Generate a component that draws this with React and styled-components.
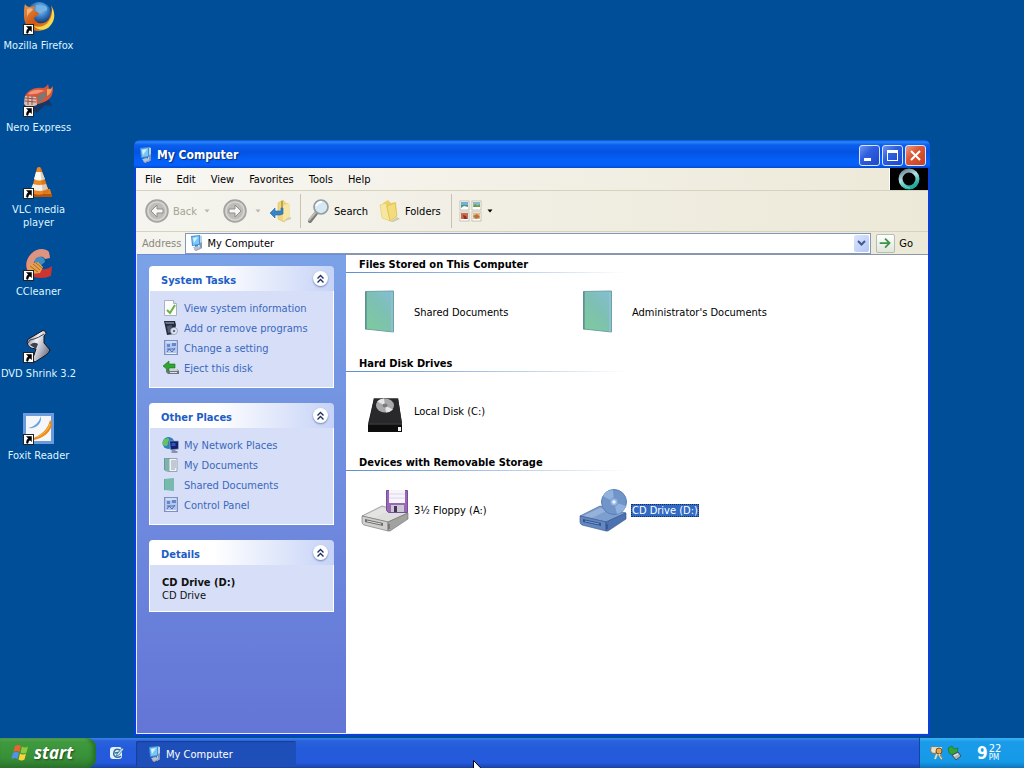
import React from "react";
import styled, { createGlobalStyle, css } from "styled-components";

const GlobalStyle = createGlobalStyle`
  * {
    box-sizing: border-box;
  }
  body {
    margin: 0;
    overflow: hidden;
    font-family: "DejaVu Sans Condensed", "DejaVu Sans", sans-serif;
    font-size: 11px;
    line-height: 13px;
  }
  button, input {
    font: inherit;
    color: inherit;
    padding: 0;
    border: 0;
    background: none;
  }
  a {
    color: inherit;
    text-decoration: none;
  }
  h1, h2, p {
    margin: 0;
    font-size: inherit;
  }
  svg {
    display: block;
    flex: none;
  }
`;

/* ---------- icons ---------- */

const ShortcutArrow = () => (
  <g>
    <rect x="0.5" y="22.5" width="10" height="10" fill="#fff" stroke="#222" />
    <path d="M3.500 24.500h5v5l-1.600-1.600q-2 1.500-2 3.600l-1.600-0.500q0-3 2-4.700z" fill="#000" stroke="#000" strokeWidth="0.500" />
  </g>
);

const FirefoxIcon = () => (
  <svg width="32" height="33" viewBox="0 0 32 33">
    <defs>
      <radialGradient id="ffGlobe" cx="55%" cy="30%" r="60%">
        <stop offset="0" stopColor="#a5d4f5" />
        <stop offset="0.500" stopColor="#3c83cc" />
        <stop offset="1" stopColor="#12346f" />
      </radialGradient>
      <linearGradient id="ffFox" x1="0" y1="0" x2="1" y2="1">
        <stop offset="0" stopColor="#e59a4e" />
        <stop offset="0.500" stopColor="#cf5514" />
        <stop offset="1" stopColor="#eda41e" />
      </linearGradient>
    </defs>
    <circle cx="16" cy="12" r="12" fill="url(#ffGlobe)" />
    <path d="M13 3c3 0 4 2 7 1s5 2 4 4-4 0-5 2-3 1-5-1z" fill="#74b4e4" />
    <path d="M2 2c1 2 3 3 5 3 2-1 4-1 6 0-2 1-3 3-2 4 2 0 4 1 5 3-1 2-4 2-5 4 1 4 5 6 9 5 5-1 7-5 8-10 1-3 1-5 0-8 3 4 4 9 2 14-2 7-8 12-15 12C7 29 1 23 1 14 1 9 1 5 2 2z" fill="url(#ffFox)" />
    <path d="M28 4c2 4 1 11-2 15-3 5-9 7-15 5 4 5 12 5 16 0 5-5 6-13 1-20z" fill="#f5d852" />
    <path d="M4 7c2-1 4-1 6 0-1 3-4 3-6 8z" fill="#f0b47c" />
    <ShortcutArrow />
  </svg>
);

const NeroIcon = () => (
  <svg width="32" height="33" viewBox="0 0 32 33">
    <path d="M14 18l12-2 3 6-7-1-8 8-5-3z" fill="#163763" />
    <path d="M2 12C5 6 12 3 19 4c3 0 5-2 6-4 1 2 0 4 2 5l3-3c0 4 0 10-4 13-6 5-14 5-20 7-4-2-5-6-4-10z" fill="#d9553c" />
    <path d="M5 10c4-5 11-5 17-3-4 0-6 3-10 3-3 0-4 1-7 0z" fill="#f29478" />
    <path d="M24 5c2 0 4 1 5-1 0 4-3 7-5 8z" fill="#f0a55a" />
    <path d="M2 12l11 1 1 8-9 3-4-4z" fill="#d8c0b4" />
    <path d="M2 14l11 1M2 17l11 1M5 12v9M9 12v9" stroke="#975046" fill="none" />
    <path d="M14 12l8-4 2 3-8 9z" fill="#7b7775" />
    <ShortcutArrow />
  </svg>
);

const VlcIcon = () => (
  <svg width="32" height="33" viewBox="0 0 32 33">
    <path d="M5 24l22-1 2 7H5z" fill="#e8801a" />
    <path d="M5 28h24v3H5z" fill="#b95308" />
    <path d="M14 2q2-2 4 0l8 24q-9 5-18 1z" fill="#f08821" />
    <path d="M13 6h6l3 7q-6 3-11 0z" fill="#fbfbf6" />
    <path d="M10 18q6 2 13 0l2 5q-8 4-17 0z" fill="#f1f1ee" />
    <path d="M17 2l1 0 8 24-6 3z" fill="#994a10" opacity="0.250" />
    <ShortcutArrow />
  </svg>
);

const CCleanerIcon = () => (
  <svg width="32" height="33" viewBox="0 0 32 33">
    <path d="M27 8C24 2 17 0 11 4 4 8 1 17 5 24c4 7 15 7 23 4l1-10c-4 4-14 5-16-1-2-6 4-11 9-8z" fill="#cf3530" />
    <path d="M26 4C21-1 13 1 8 6 3 11 2 18 5 23l6-3c-2-6 3-13 9-11l2 2 5-1z" fill="#e0947f" />
    <path d="M13 10c5-3 9 0 9 4l-5 4-6-4z" fill="#3f8dc2" />
    <path d="M5 17l10-3 5 5-3 6-9 1z" fill="#e4a34e" />
    <path d="M7 18l8 6M10 16l7 6M13 15l6 5" stroke="#b36522" />
    <ShortcutArrow />
  </svg>
);

const DvdShrinkIcon = () => (
  <svg width="32" height="33" viewBox="0 0 32 33">
    <defs>
      <linearGradient id="dvdRoll" x1="0" y1="0.200" x2="1" y2="0.800">
        <stop offset="0" stopColor="#77788a" />
        <stop offset="0.350" stopColor="#f1f1f5" />
        <stop offset="0.650" stopColor="#b3b4c2" />
        <stop offset="1" stopColor="#5d5f6c" />
      </linearGradient>
    </defs>
    <path d="M4 12Q4 9 7 8L20 0.500q3 0 3 3L21 6v7l6 7q-1 3-4 5L12 32q-3-1-2-4l3-9-5-1q-4-2-4-6z" fill="url(#dvdRoll)" stroke="#15171f" />
    <path d="M5 13q1-4 6-4 4-1 10-5" stroke="#41434f" fill="none" />
    <path d="M7 15q4-4 8-1l-2 5z" fill="#3e404d" />
    <ShortcutArrow />
  </svg>
);

const FoxitIcon = () => (
  <svg width="32" height="33" viewBox="0 0 32 33">
    <rect x="0" y="1" width="31" height="31" fill="#6b9bdb" />
    <rect x="3" y="4" width="25" height="25" fill="#f4f6fa" />
    <path d="M5 16C11 15 16 11 18 4c1 8-5 13-13 12z" fill="#69a2dc" />
    <path d="M8 27C19 23 25 17 27 8l2 3c0 8-9 16-19 17z" fill="#ea8a1b" />
    <path d="M14 25c7-3 11-7 13-13" stroke="#f9c353" fill="none" />
    <ShortcutArrow />
  </svg>
);

const ComputerIcon = () => (
  <svg width="16" height="16" viewBox="0 0 16 16">
    <path d="M10 0l3 1v12l-3 2z" fill="#b9d2e8" />
    <path d="M11 8l2-1v6l-2 1z" fill="#8299b4" />
    <path d="M2 1l9-1v10l-8 1z" fill="#3f93de" />
    <path d="M3 2l7-1v8l-6 1z" fill="#7cc6f4" />
    <path d="M4 3l5-1-4 6z" fill="#d4f2ff" />
    <path d="M6 10h3v2H6z" fill="#567ba6" />
    <path d="M4 12l5-1 3 2-5 3z" fill="#aac4df" />
    <path d="M5 14l2 1.500 4-2" stroke="#c08b7d" fill="none" strokeWidth="0.800" />
  </svg>
);

const ArrowCircle = ({ forward }) => (
  <svg width="24" height="24" viewBox="0 0 24 24">
    <circle cx="12" cy="12" r="11" fill="#bdbcb9" stroke="#a3a2a0" strokeWidth="1.500" />
    <circle cx="12" cy="12" r="9" fill="none" stroke="#d6d5d1" strokeWidth="1.500" />
    <path
      d={forward ? "M12 6l6 6-6 6v-4H6v-4h6z" : "M12 6l-6 6 6 6v-4h6v-4h-6z"}
      fill="#f6f6f3"
      stroke="#908f8d"
      strokeWidth="1"
    />
  </svg>
);

const UpFolderIcon = () => (
  <svg width="22" height="24" viewBox="0 0 22 24">
    <path d="M8 4l5-3 2 3 4 1v13l-5 5-6-3z" fill="#efd680" stroke="#dcbc60" strokeWidth="0.600" />
    <path d="M13 7l6-3v14l-6 4z" fill="#f8e7a4" />
    <path d="M16 20l5-2v2l-6 2z" fill="#ccc9bb" />
    <path d="M12 2v8" stroke="#a89446" strokeWidth="1.500" />
    <path d="M0 14l5-5v3h6V9l2 0v6l-3 1H5v3z" fill="#3585c6" stroke="#2267a5" strokeWidth="0.600" />
  </svg>
);

const SearchIcon = () => (
  <svg width="22" height="26" viewBox="1 0 22 26">
    <path d="M10 14l-7 9" stroke="#7c7a78" strokeWidth="4" strokeLinecap="round" />
    <path d="M9 14l-7 8" stroke="#bebbb7" strokeWidth="2" strokeLinecap="round" />
    <circle cx="14" cy="9" r="7" fill="#d6e8f2" stroke="#949da3" strokeWidth="1.700" />
    <path d="M9 8q2-4 6-4" stroke="#fff" strokeWidth="2" fill="none" />
  </svg>
);

const FoldersIcon = () => (
  <svg width="22" height="24" viewBox="0 0 22 24">
    <path d="M4 4l5-3 3 3 5-1 1 14-7 5-8-4z" fill="#eccf68" />
    <path d="M1 6l6-2 4 18-8-3z" fill="#f6e79e" stroke="#e6c866" strokeWidth="0.600" />
    <path d="M8 7l8-3 2 13-7 5z" fill="#f3dc7a" stroke="#dcb94d" strokeWidth="0.600" />
    <path d="M11 23l7-5 3 2-7 3z" fill="#cfc9b2" />
  </svg>
);

const ViewsIcon = () => (
  <svg width="24" height="24" viewBox="0 0 24 24">
    {[[1, 2], [13, 2], [1, 13], [13, 13]].map(([x, y]) => (
      <rect key={`${x}-${y}`} x={x} y={y} width="9" height="9" fill="#fff" stroke="#b8b6ab" strokeWidth="0.800" />
    ))}
    <path d="M2 3h7v3H2z" fill="#6fb2d8" />
    <path d="M2 6h7v2l-4-1-3 2z" fill="#57947f" />
    <path d="M14 3h7v5h-7z" fill="#8ab8cb" />
    <path d="M14 8l2-3 3 2 2-2v3z" fill="#6a9b3c" />
    <path d="M2 14h7v6H2z" fill="#c96a4b" />
    <path d="M4 16l3 1 1 3H5z" fill="#8b3026" />
    <path d="M14 14h7v6h-7z" fill="#e0ba8c" />
    <path d="M14 17l4-2 3 3-4 2z" fill="#b9713c" />
  </svg>
);

const CheckPageIcon = () => (
  <svg width="16" height="16" viewBox="0 0 16 16">
    <path d="M1.500 0.500h9l3 3v12h-12z" fill="#fbfcfb" stroke="#a6b5bd" />
    <path d="M10.500 0.500v3h3" fill="#dde4e8" stroke="#a6b5bd" />
    <path d="M4 10l3 3 5-8" stroke="#6cb045" strokeWidth="2" fill="none" />
  </svg>
);

const ProgramsIcon = () => (
  <svg width="16" height="16" viewBox="0 0 16 16">
    <path d="M1 1h11l1 4-2 9-7 1z" fill="#272c3a" />
    <path d="M2 2h9v2H3z" fill="#66718a" />
    <path d="M4 6l5-1-1 7-3 1z" fill="#4f5b72" />
    <circle cx="11" cy="11" r="3.500" fill="#e3e9f0" stroke="#7b8695" strokeWidth="0.600" />
    <circle cx="11" cy="11" r="1.300" fill="#5d74a0" />
  </svg>
);

const SettingIcon = () => (
  <svg width="16" height="16" viewBox="0 0 16 16">
    <rect x="1.500" y="0.500" width="13" height="14" fill="#b4c6ee" stroke="#7e90bc" />
    <path d="M4 4h3v3H4zM9 3h4v3H9z" fill="#6487ce" />
    <path d="M4 9h8M4 12l2-3 3 3 3-4" stroke="#4c6db4" fill="none" />
    <path d="M3 2h10M3 13.500h10" stroke="#e9f0ff" />
  </svg>
);

const EjectIcon = () => (
  <svg width="16" height="16" viewBox="0 0 16 16">
    <path d="M3 9h11l2 2v3H5l-2-2z" fill="#6e7479" />
    <path d="M4 9h10l1 2H6z" fill="#cdd3d6" />
    <path d="M7 12.500h7" stroke="#dfe3e5" />
    <path d="M0 6l6-5v3h6v4H6v3z" fill="#30a52f" stroke="#17711b" strokeWidth="0.600" />
  </svg>
);

const NetworkIcon = () => (
  <svg width="17" height="16" viewBox="0 0 17 16">
    <circle cx="6" cy="6" r="6" fill="#2c7fc0" />
    <path d="M2 2c4-2 6 0 4 2s1 3-2 5C2 10 0 7 0 6c0-2 1-3 2-4z" fill="#65c35d" />
    <path d="M7 4h9v8l-8 1z" fill="#13226e" stroke="#98a8cd" strokeWidth="0.700" />
    <path d="M9 6h4v3H9z" fill="#3652c0" />
    <path d="M10 13h3v1h2v2H9v-2z" fill="#8593ad" />
  </svg>
);

const MyDocsIcon = () => (
  <svg width="16" height="16" viewBox="0 0 16 16">
    <path d="M1 1h6v14l-6-2z" fill="#5f9d97" />
    <path d="M6 1.500h8v13H6z" fill="#eff3f7" stroke="#8693a2" strokeWidth="0.800" />
    <path d="M8 4h5M8 6h5M8 8h5M8 10h5M8 12h4" stroke="#7d8c9e" strokeWidth="0.800" />
    <path d="M2 1l4 1v13l-4-1z" fill="#7fb2aa" />
  </svg>
);

const SharedIcon = () => (
  <svg width="16" height="16" viewBox="0 0 16 16">
    <path d="M1 2l10-1v13L1 13z" fill="#77b9ac" />
    <path d="M1.500 2v11" stroke="#65a89c" />
  </svg>
);

const FolderIcon = () => (
  <svg width="48" height="48" viewBox="1 0 48 48">
    <defs>
      <linearGradient id="folder" x1="1" y1="0" x2="0.300" y2="1">
        <stop offset="0" stopColor="#85bdd6" />
        <stop offset="0.500" stopColor="#7dc0b3" />
        <stop offset="1" stopColor="#7ec99f" />
      </linearGradient>
    </defs>
    <path d="M5.500 3.500L33.500 3v41L5.500 41z" fill="url(#folder)" stroke="#6fa2a6" />
    <path d="M6 41.500V3.500" stroke="#4f7f84" />
    <path d="M31 4l2 1v39l-2-1z" fill="#8cc2cf" />
  </svg>
);

const HardDiskIcon = () => (
  <svg width="48" height="48" viewBox="1 0 48 48">
    <path d="M14 11h24l4 26v8H8v-8z" fill="#1b1b1c" />
    <path d="M14 11h24l4 25H9z" fill="#29292b" />
    <path d="M14 11.500h24" stroke="#5c5c5e" />
    <path d="M8 37h34v8H8z" fill="#0e0e0f" />
    <path d="M8 37h34" stroke="#4b4b4e" />
    <ellipse cx="25" cy="18.500" rx="9" ry="7" fill="#a9a9ab" />
    <path d="M25 18.500l-8-4q3-3 7-3zM25 18.500l8 4q-3 3-7 3z" fill="#e6e6e7" />
    <ellipse cx="25" cy="18.500" rx="2.500" ry="2" fill="#7a7a7c" />
    <rect x="38" y="40" width="3" height="4" fill="#f1f1ee" />
  </svg>
);

const DriveBase = ({ top, front, side, line }) => (
  <g strokeLinejoin="round">
    <path d="M2 31l20-10 26 7-20 9z" fill={top} stroke={line} strokeWidth="0.600" />
    <path d="M5 31l17-8 8 2-16 8z" fill="#fff" opacity="0.200" />
    <path d="M2 31l26 6v9L4 40q-2-1-2-3z" fill={front} stroke={line} strokeWidth="0.600" />
    <path d="M28 37l20-9v6L30 46h-2z" fill={side} stroke={line} strokeWidth="0.600" />
    <path d="M5 34l18 4v3L5 37z" fill={line} />
    <path d="M7 36l14 3" stroke={top} />
    <path d="M29 39v5" stroke={line} strokeWidth="1.500" />
  </g>
);

const FloppyIcon = () => (
  <svg width="50" height="50" viewBox="0 0 50 50">
    <DriveBase top="#dededc" front="#cfcfcd" side="#a2a2a0" line="#6d6d6b" />
    <path d="M26.500 5.500h21v22h-19l-2-2z" fill="#9a66b6" stroke="#75509a" />
    <rect x="29" y="5" width="16" height="13" fill="#f7f4fb" />
    <path d="M29 9h16M29 13h16" stroke="#ded5e9" />
    <rect x="31" y="20" width="13" height="7" fill="#c9c8d3" />
    <rect x="34" y="21" width="3" height="6" fill="#473355" />
  </svg>
);

const CdDriveIcon = () => (
  <svg width="50" height="50" viewBox="0 0 50 50">
    <DriveBase top="#7d9fd0" front="#6288c4" side="#4c72b0" line="#34538c" />
    <circle cx="36" cy="17" r="12.500" fill="#7194c9" stroke="#5a7eb8" />
    <path d="M36 17L25 11q3-6 10-6zM36 17l12 4q-3 7-9 8z" fill="#92b2de" />
    <circle cx="36" cy="17" r="4" fill="#98b8e2" stroke="#6a8ec6" strokeWidth="0.700" />
    <circle cx="36" cy="17" r="1.700" fill="#eaf3ff" />
  </svg>
);

const ChevronsUp = () => (
  <svg width="9" height="10" viewBox="0 0 9 10">
    <path d="M1.500 4.500l3-3 3 3M1.500 8.500l3-3 3 3" stroke="#1d2f6b" strokeWidth="1.400" fill="none" />
  </svg>
);

const ThrobberIcon = () => (
  <svg width="22" height="22" viewBox="0 0 22 22">
    <defs>
      <linearGradient id="ring" x1="0" y1="0" x2="0.500" y2="1">
        <stop offset="0" stopColor="#64798a" />
        <stop offset="0.500" stopColor="#b5e2e3" />
        <stop offset="1" stopColor="#21ac9f" />
      </linearGradient>
    </defs>
    <circle cx="11" cy="11" r="8.500" fill="none" stroke="url(#ring)" strokeWidth="4" />
    <path d="M3 13q3 7 9 7" stroke="#5de0cd" fill="none" />
  </svg>
);

const WindowsFlag = () => (
  <svg width="19" height="18" viewBox="0 0 19 18">
    <path d="M4 2q3-2 6 0L8.500 8Q5.500 6 2.500 8z" fill="#ed6230" />
    <path d="M11 2.500q3 2 6 0L15.500 8.500q-3 2-6 0z" fill="#8dcb3c" />
    <path d="M2 9q3-2 6 0L6.500 15Q3.500 13 0.500 15z" fill="#5690ef" />
    <path d="M9 9.500q3 2 6 0L13.500 15.500q-3 2-6 0z" fill="#fbd437" />
  </svg>
);

const QuickLaunchIcon = () => (
  <svg width="16" height="16" viewBox="0 0 16 16">
    <rect x="1" y="2" width="12" height="12" rx="3" fill="#e6f2fb" />
    <path d="M11 5q-5-2-6 2t2 5 5-1M6 8l6-1" stroke="#32719f" strokeWidth="1.500" fill="none" />
    <path d="M8 9l5-6 2 1-5 6-3 1z" fill="#c2e7f7" stroke="#315e87" strokeWidth="0.700" />
  </svg>
);

const TrayKeysIcon = () => (
  <svg width="16" height="16" viewBox="0 0 16 16">
    <circle cx="5" cy="5" r="3.500" fill="#e8e2cc" stroke="#8d6b48" />
    <path d="M1 2h12v3H9z" fill="#d9d8cc" />
    <circle cx="10" cy="6" r="3" fill="#e7aa43" stroke="#7c4b1e" />
    <path d="M8 9l-2 5M10 9l3 5" stroke="#f0d9a0" strokeWidth="2" />
    <path d="M11 10l3 4" stroke="#b46b2c" />
  </svg>
);

const TrayDeviceIcon = () => (
  <svg width="16" height="16" viewBox="0 0 16 16">
    <path d="M1 3l4-2 2 3 4-1-1 5-5 2-3-2z" fill="#34a438" stroke="#17672a" strokeWidth="0.600" />
    <path d="M5 10l6-3 3 4-5 4z" fill="#aeb8bd" stroke="#3f4e5b" />
    <path d="M7 11l4-2" stroke="#f4f6f7" />
  </svg>
);

const Caret = ({ color }) => (
  <svg width="7" height="4" viewBox="0 0 7 4">
    <path d="M0.500 0.500h5L3 3.500z" fill={color} />
  </svg>
);

const PointerIcon = () => (
  <svg width="12" height="19" viewBox="0 0 12 19">
    <path d="M0.500 0.500v15l3.500-3.300 2.300 5.300 2.200-1-2.300-5.200h4.800z" fill="#fff" stroke="#000" />
  </svg>
);

/* ---------- desktop ---------- */

const Desktop = styled.div`
  position: relative;
  display: flex;
  flex-direction: column;
  height: 100vh;
  overflow: hidden;
  background: #004e98;
`;

const Shortcuts = styled.nav`
  flex: 1;
  min-height: 0;
  display: flex;
  flex-direction: column;
  align-items: flex-start;
  padding-top: 2px;
`;

const Shortcut = styled.a`
  display: flex;
  flex-direction: column;
  align-items: center;
  gap: 4px;
  flex: 0 0 82px;
  width: 77px;
  color: #dff5ff;
  text-align: center;
`;

const Pointer = styled.div`
  position: absolute;
  left: 473px;
  bottom: -11px;
`;

/* ---------- window ---------- */

const Window = styled.section`
  position: absolute;
  top: 140px;
  right: 94px;
  bottom: 32px;
  left: 134px;
  display: flex;
  flex-direction: column;
  border: solid #0a3fd8;
  border-width: 0 2px 2px;
  border-radius: 6px 6px 0 0;
  background: #0a3fd8;
`;

const TitleBar = styled.header`
  display: flex;
  align-items: center;
  gap: 3px;
  height: 28px;
  margin: 0 -2px;
  padding: 2px 4px 0 4px;
  border-radius: 6px 6px 0 0;
  background: linear-gradient(#0753d8 0, #2c86fa 2px, #0b5fee 5px, #0453e2 12px, #0560f8 20px, #0561fb 25px, #0349d2 28px);
  color: #fff;

  h1 {
    flex: 1;
    font-size: 12px;
    line-height: 16px;
    text-shadow: 1px 1px 1px #0a2c7c;
  }
`;

const ControlButton = styled.button`
  display: grid;
  place-items: center;
  width: 21px;
  height: 21px;
  border: 1px solid #d9e5ff;
  border-radius: 3px;
  background: ${({ $close }) =>
    $close
      ? "linear-gradient(135deg, #e99a84, #dc5837 40%, #c5401f)"
      : "linear-gradient(135deg, #6f94ee, #2f5fe0 40%, #1c47c9)"};
`;

const Controls = styled.div`
  display: flex;
  gap: 2px;
`;

const MenuBar = styled.nav`
  display: flex;
  height: 23px;
  padding-left: 2px;
  background: linear-gradient(90deg, #f8f7f3, #ece9d8);
  border-bottom: 1px solid #d5d2c0;
`;

const MenuItem = styled.button`
  padding: 0 8px 0 7px;
`;

const Throbber = styled.div`
  display: grid;
  place-items: center;
  width: 39px;
  margin-left: auto;
  border-left: 1px solid #fff;
  background: #000;
`;

const Toolbar = styled.div`
  display: flex;
  align-items: center;
  height: 41px;
  padding-left: 9px;
  background: linear-gradient(90deg, #f5f4ee, #ece9d8);
  border-bottom: 1px solid #d5d2c0;
`;

const ToolButton = styled.button`
  display: flex;
  align-items: center;
  gap: 4px;
  margin-right: ${({ $after }) => $after || 0}px;
  color: ${({ $muted }) => ($muted ? "#a5a397" : "#000")};
`;

const Divider = styled.span`
  width: 1px;
  height: 34px;
  margin-right: 7px;
  background: #c6c3b2;
`;

const AddressBar = styled.div`
  display: flex;
  align-items: center;
  height: 22px;
  padding-left: 6px;
  background: linear-gradient(90deg, #f5f4ee, #ece9d8);
  color: #8a887c;
`;

const AddressField = styled.div`
  flex: 1;
  display: flex;
  align-items: center;
  gap: 2px;
  height: 21px;
  margin: 0 5px 0 4px;
  padding: 0 1px 0 3px;
  border: 1px solid #8198b8;
  background: #fff;
  color: #000;

  input {
    flex: 1;
    min-width: 0;
    outline: 0;
  }
`;

const DropButton = styled.button`
  display: grid;
  place-items: center;
  width: 15px;
  height: 17px;
  border-radius: 2px;
  background: linear-gradient(135deg, #dbe5fd, #b3c7f5);
`;

const GoButton = styled.button`
  display: flex;
  align-items: center;
  gap: 4px;
  margin-right: 15px;
  color: #000;

  svg {
    width: 19px;
    height: 19px;
    border: 1px solid #b2bfb2;
    border-radius: 2px;
    background: linear-gradient(#fff, #dfe6da);
  }
`;

const Body = styled.div`
  flex: 1;
  min-height: 0;
  display: flex;
  border: solid #e6edfb;
  border-width: 0 0 1px 1px;
  background: #fff;
`;

/* ---------- task pane ---------- */

const Sidebar = styled.aside`
  flex: 0 0 209px;
  display: flex;
  flex-direction: column;
  gap: 15px;
  padding: 11px 12px;
  border-top: 1px solid #6f8bd6;
  background: linear-gradient(#7ba2e7, #6375d6);
`;

const Panel = styled.section`
  display: flex;
  flex-direction: column;
`;

const PanelHeader = styled.div`
  display: flex;
  align-items: center;
  justify-content: space-between;
  height: 25px;
  padding: 0 6px 0 12px;
  border-radius: 4px 4px 0 0;
  background: linear-gradient(90deg, #fff 35%, #c6d3f7);
  color: #215dc6;

  h2 {
    padding-top: 3px;
  }
`;

const CollapseButton = styled.button`
  display: grid;
  place-items: center;
  width: 15px;
  height: 15px;
  border-radius: 50%;
  background: #fff;
  box-shadow: 0 1px 2px #7084b8;
`;

const PanelBody = styled.div`
  border: 1px solid #fff;
  border-top: 0;
  background: #d6dff7;
  padding: ${({ $text }) => ($text ? "11px 12px 9px" : "7px 12px 9px")};
`;

const TaskLink = styled.a`
  display: flex;
  align-items: center;
  gap: 4px;
  height: 20px;
  color: #3a67bd;

  svg {
    width: 18px;
  }
`;

const PanelText = styled.p`
  color: #111;
`;

/* ---------- file list ---------- */

const Content = styled.main`
  flex: 1;
  min-width: 0;
  border-top: 1px solid #8c96a6;
`;

const Group = styled.section`
  margin-bottom: 2px;

  &:first-child h2 {
    height: 18px;
    padding-top: 3px;
  }
`;

const GroupTitle = styled.h2`
  height: 19px;
  padding: 4px 0 0 13px;
  background: linear-gradient(90deg, #5b8fc9, #c9dbee 200px, #fff 280px) left bottom / 100% 1px no-repeat;
`;

const Items = styled.div`
  display: grid;
  grid-template-columns: repeat(auto-fill, 218px);
  padding-left: 14px;
`;

const Item = styled.a`
  display: flex;
  align-items: center;
  gap: 3px;
  height: 78px;

  svg {
    width: 50px;
  }
`;

const ItemLabel = styled.span`
  padding: 0 1px;
  ${({ $selected }) =>
    $selected &&
    css`
      background: #316ac5;
      color: #fff;
      outline: 1px dotted #16305e;
      outline-offset: -1px;
    `}
`;

/* ---------- taskbar ---------- */

const Taskbar = styled.footer`
  flex: 0 0 30px;
  display: flex;
  background: linear-gradient(#3c80ee 0, #2a62dc 3px, #245bdb 10px, #2359da 25px, #1941a5 30px);
  color: #fff;
`;

const StartButton = styled.button`
  display: flex;
  align-items: center;
  gap: 4px;
  width: 96px;
  padding-left: 11px;
  border-radius: 0 9px 9px 0;
  background: linear-gradient(#6fb56b 0, #3f9a3e 4px, #388f38 20px, #2c762c 30px);
  box-shadow: inset -3px 0 4px #236f27;
  font-family: "Open Sans", sans-serif;
  font-size: 17px;
  font-weight: 700;
  font-style: italic;
  line-height: 20px;
  text-shadow: 1px 1px 2px #1b4a1b;
`;

const QuickLaunch = styled.button`
  padding: 0 11px 0 13px;
`;

const TaskButton = styled.button`
  display: flex;
  align-items: center;
  gap: 3px;
  width: 160px;
  height: 26px;
  margin-top: 3px;
  padding-left: 11px;
  border-radius: 2px;
  background: #1e4fb9;
  box-shadow: inset 1px 1px 1px #163d93;
`;

const Tray = styled.div`
  display: flex;
  align-items: center;
  gap: 2px;
  width: 105px;
  margin-left: auto;
  padding-left: 9px;
  border-left: 1px solid #14449c;
  background: linear-gradient(#3cb4f3 0, #1a9bea 4px, #159ae8 24px, #0f74bc 30px);
`;

const Clock = styled.time`
  display: flex;
  align-items: center;
  gap: 1px;
  margin-left: 12px;

  strong {
    font-size: 17px;
  }
  span {
    display: flex;
    flex-direction: column;
    font-size: 11px;
    line-height: 10px;
  }
  small {
    font-size: 8px;
    line-height: 8px;
  }
`;

const shortcuts = [
  { label: "Mozilla Firefox", Icon: FirefoxIcon },
  { label: "Nero Express", Icon: NeroIcon },
  { label: "VLC media player", Icon: VlcIcon },
  { label: "CCleaner", Icon: CCleanerIcon },
  { label: "DVD Shrink 3.2", Icon: DvdShrinkIcon },
  { label: "Foxit Reader", Icon: FoxitIcon },
];

const menus = ["File", "Edit", "View", "Favorites", "Tools", "Help"];

const panels = [
  {
    title: "System Tasks",
    links: [
      { label: "View system information", Icon: CheckPageIcon },
      { label: "Add or remove programs", Icon: ProgramsIcon },
      { label: "Change a setting", Icon: SettingIcon },
      { label: "Eject this disk", Icon: EjectIcon },
    ],
  },
  {
    title: "Other Places",
    links: [
      { label: "My Network Places", Icon: NetworkIcon },
      { label: "My Documents", Icon: MyDocsIcon },
      { label: "Shared Documents", Icon: SharedIcon },
      { label: "Control Panel", Icon: SettingIcon },
    ],
  },
];

const groups = [
  {
    title: "Files Stored on This Computer",
    items: [
      { label: "Shared Documents", Icon: FolderIcon },
      { label: "Administrator's Documents", Icon: FolderIcon },
    ],
  },
  {
    title: "Hard Disk Drives",
    items: [{ label: "Local Disk (C:)", Icon: HardDiskIcon }],
  },
  {
    title: "Devices with Removable Storage",
    items: [
      { label: "3½ Floppy (A:)", Icon: FloppyIcon },
      { label: "CD Drive (D:)", Icon: CdDriveIcon, selected: true },
    ],
  },
];

function TaskPanel({ title, text, children }) {
  return (
    <Panel>
      <PanelHeader>
        <h2>{title}</h2>
        <CollapseButton aria-label={`Collapse ${title}`}>
          <ChevronsUp />
        </CollapseButton>
      </PanelHeader>
      <PanelBody $text={text}>{children}</PanelBody>
    </Panel>
  );
}

function ComputerWindow() {
  return (
    <Window>
      <TitleBar>
        <ComputerIcon />
        <h1>My Computer</h1>
        <Controls>
          <ControlButton aria-label="Minimize">
            <svg width="13" height="13" viewBox="0 0 13 13">
              <path d="M1 9h7v3H1z" fill="#fff" />
            </svg>
          </ControlButton>
          <ControlButton aria-label="Maximize">
            <svg width="13" height="13" viewBox="0 0 13 13">
              <path d="M1 1h11v11H1zM2 4v7h9V4z" fill="#fff" fillRule="evenodd" />
            </svg>
          </ControlButton>
          <ControlButton $close aria-label="Close">
            <svg width="13" height="13" viewBox="0 0 13 13">
              <path d="M2 2l9 9M11 2l-9 9" stroke="#fff" strokeWidth="2" />
            </svg>
          </ControlButton>
        </Controls>
      </TitleBar>

      <MenuBar>
        {menus.map((menu) => (
          <MenuItem key={menu}>{menu}</MenuItem>
        ))}
        <Throbber>
          <ThrobberIcon />
        </Throbber>
      </MenuBar>

      <Toolbar>
        <ToolButton $muted $after={7}>
          <ArrowCircle />
          Back
        </ToolButton>
        <ToolButton $after={12} aria-label="Back history">
          <Caret color="#b8b6ab" />
        </ToolButton>
        <ToolButton $after={8} aria-label="Forward">
          <ArrowCircle forward />
        </ToolButton>
        <ToolButton $after={8} aria-label="Forward history">
          <Caret color="#b8b6ab" />
        </ToolButton>
        <ToolButton $after={8} aria-label="Up">
          <UpFolderIcon />
        </ToolButton>
        <Divider />
        <ToolButton $after={11}>
          <SearchIcon />
          Search
        </ToolButton>
        <ToolButton $after={10}>
          <FoldersIcon />
          Folders
        </ToolButton>
        <Divider />
        <ToolButton aria-label="Views">
          <ViewsIcon />
          <Caret color="#000" />
        </ToolButton>
      </Toolbar>

      <AddressBar>
        <label htmlFor="address">Address</label>
        <AddressField>
          <ComputerIcon />
          <input id="address" type="text" defaultValue="My Computer" />
          <DropButton aria-label="Address history">
            <svg width="9" height="6" viewBox="0 0 9 6">
              <path d="M1 1l3.500 3.500L8 1" stroke="#43598f" strokeWidth="2" fill="none" />
            </svg>
          </DropButton>
        </AddressField>
        <GoButton>
          <svg viewBox="0 0 19 19">
            <path d="M3 9h11M9 4l5 5-5 5" stroke="#3f9346" strokeWidth="2" fill="none" />
          </svg>
          Go
        </GoButton>
      </AddressBar>

      <Body>
        <Sidebar>
          {panels.map(({ title, links }) => (
            <TaskPanel key={title} title={title}>
              {links.map(({ label, Icon }) => (
                <TaskLink key={label} href="#">
                  <Icon />
                  {label}
                </TaskLink>
              ))}
            </TaskPanel>
          ))}
          <TaskPanel title="Details" text>
            <PanelText>
              <strong>CD Drive (D:)</strong>
            </PanelText>
            <PanelText>CD Drive</PanelText>
          </TaskPanel>
        </Sidebar>

        <Content>
          {groups.map(({ title, items }) => (
            <Group key={title}>
              <GroupTitle>{title}</GroupTitle>
              <Items>
                {items.map(({ label, Icon, selected }) => (
                  <Item key={label} href="#">
                    <Icon />
                    <ItemLabel $selected={selected}>{label}</ItemLabel>
                  </Item>
                ))}
              </Items>
            </Group>
          ))}
        </Content>
      </Body>
    </Window>
  );
}

export default function App() {
  return (
    <Desktop>
      <GlobalStyle />
      <Shortcuts>
        {shortcuts.map(({ label, Icon }) => (
          <Shortcut key={label} href="#">
            <Icon />
            <span>{label}</span>
          </Shortcut>
        ))}
      </Shortcuts>

      <ComputerWindow />

      <Taskbar>
        <StartButton>
          <WindowsFlag />
          start
        </StartButton>
        <QuickLaunch aria-label="Internet Explorer">
          <QuickLaunchIcon />
        </QuickLaunch>
        <TaskButton>
          <ComputerIcon />
          My Computer
        </TaskButton>
        <Tray>
          <TrayKeysIcon />
          <TrayDeviceIcon />
          <Clock dateTime="21:22">
            <strong>9</strong>
            <span>
              22
              <small>PM</small>
            </span>
          </Clock>
        </Tray>
      </Taskbar>
      <Pointer>
        <PointerIcon />
      </Pointer>
    </Desktop>
  );
}
